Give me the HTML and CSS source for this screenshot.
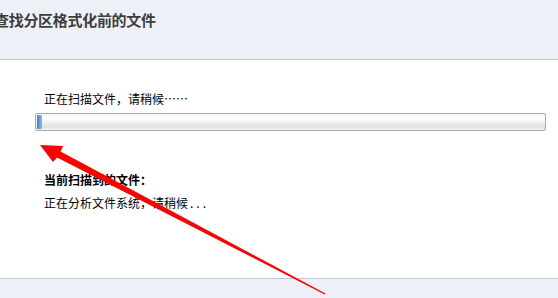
FILE: index.html
```html
<!DOCTYPE html>
<html lang="zh-CN">
<head>
<meta charset="utf-8">
<title>查找分区格式化前的文件</title>
<link rel="stylesheet" href="styles.css">
</head>
<body>
<div class="dialog">
  <div class="header">
    <h1 class="title">查找分区格式化前的文件</h1>
  </div>
  <div class="content">
    <p class="status">正在扫描文件，请稍候……</p>
    <div class="progress"><div class="progress-fill" style="width:5px"></div></div>
    <p class="current-label">当前扫描到的文件：</p>
    <p class="current-file">正在分析文件系统，请稍候<span class="dots">...</span></p>
  </div>
  <div class="footer"></div>
  <svg class="arrow" width="558" height="298" viewBox="0 0 558 298" aria-hidden="true">
    <polygon fill="#ff0000" points="40,145 63,146 60.5,151.5 325.3,293.5 324.7,294.5 57,157.5 53,162"/>
  </svg>
</div>
</body>
</html>
```
FILE: styles.css
```css
html, body {
  margin: 0;
  padding: 0;
  background: #ffffff;
}

.dialog {
  position: relative;
  width: 558px;
  height: 298px;
  overflow: hidden;
  display: flex;
  flex-direction: column;
  font-family: "Noto Sans CJK SC", "Liberation Sans", sans-serif;
  color: #000;
}

.header {
  height: 59px;
  flex: none;
  background: #eef0f7;
  border-bottom: 1px solid #c3c7d5;
  box-sizing: content-box;
}

.title {
  margin: 0;
  padding-top: 9px;
  margin-left: -6px;
  font-size: 15px;
  line-height: 22px;
  font-weight: 700;
  color: #3d3d3d;
  letter-spacing: -0.3px;
}

.content {
  flex: 1;
  background: #fff;
  padding-top: 31px;
  display: flex;
  flex-direction: column;
}

.status,
.current-label,
.current-file {
  margin: 0 0 0 44px;
  font-size: 12px;
  line-height: 16px;
}

.current-label {
  font-weight: 700;
  margin-top: 41px;
}

.current-file {
  margin-top: 7px;
}

.dots {
  letter-spacing: 3px;
  margin-left: 2px;
}

.progress {
  margin: 6px 0 0 35px;
  width: 507px;
  height: 14px;
  border: 1px solid #a3abb3;
  border-radius: 2px;
  background: linear-gradient(#f7f7f7 0%, #ffffff 25%, #ececec 60%, #e2e2e2 80%, #f2f2f2 100%);
  padding: 1px;
  box-sizing: content-box;
  display: flex;
}

.progress-fill {
  height: 100%;
  background: linear-gradient(90deg, #3a7fcf, #8fbcec);
  border-radius: 1px;
}

.footer {
  height: 19px;
  flex: none;
  background: #eef0f7;
  border-top: 1px solid #c3c7d5;
}

.arrow {
  position: absolute;
  left: 0;
  top: 0;
  pointer-events: none;
}
```
